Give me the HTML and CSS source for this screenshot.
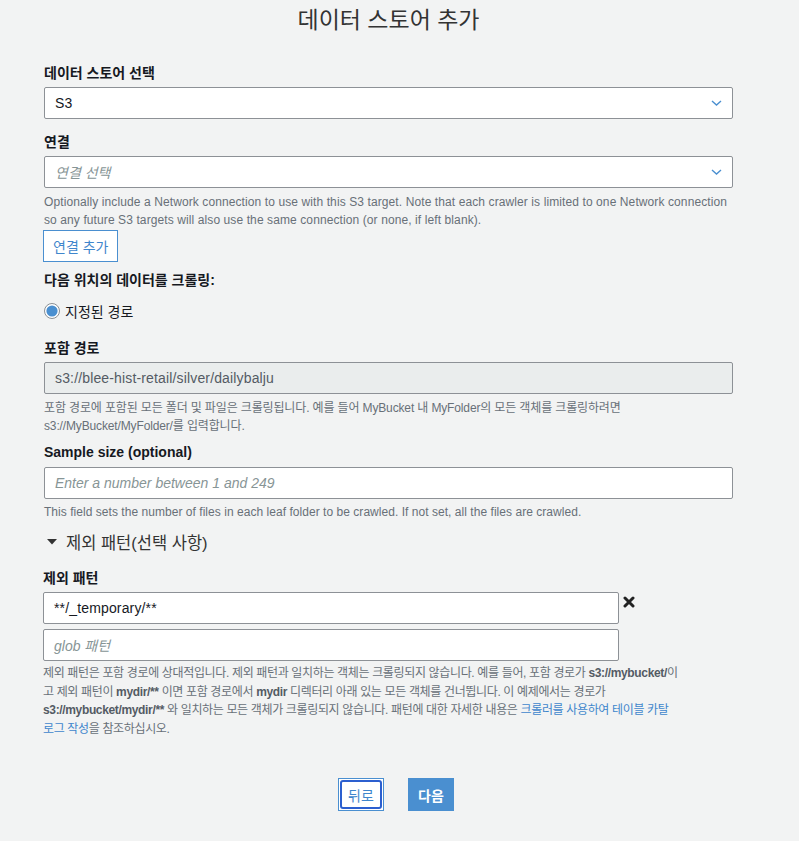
FILE: index.html
```html
<!DOCTYPE html>
<html lang="ko">
<head>
<meta charset="utf-8">
<title>데이터 스토어 추가</title>
<link rel="stylesheet" href="styles.css">
</head>
<body>
<main class="form">
  <h1 class="title">데이터 스토어 추가</h1>

  <div class="label l-store">데이터 스토어 선택</div>
  <div class="control select">
    <span class="value">S3</span>
    <svg class="chev" width="11" height="6" viewBox="0 0 11 6"><polyline points="1,1 5.5,5 10,1" fill="none" stroke="#4a8fd0" stroke-width="1.4"/></svg>
  </div>

  <div class="label l-conn">연결</div>
  <div class="control select">
    <span class="placeholder">연결 선택</span>
    <svg class="chev" width="11" height="6" viewBox="0 0 11 6"><polyline points="1,1 5.5,5 10,1" fill="none" stroke="#4a8fd0" stroke-width="1.4"/></svg>
  </div>
  <p class="help h-conn">Optionally include a Network connection to use with this S3 target. Note that each crawler is limited to one Network connection<br>so any future S3 targets will also use the same connection (or none, if left blank).</p>
  <button class="btn-outline" type="button">연결 추가</button>

  <div class="label l-crawl">다음 위치의 데이터를 크롤링:</div>
  <label class="radio-row">
    <svg width="16" height="16" viewBox="0 0 16 16"><circle cx="8" cy="8" r="7.5" fill="#fff" stroke="#8a8f94" stroke-width="1"/><circle cx="8" cy="8" r="5.6" fill="#4a8fd0"/></svg>
    <span>지정된 경로</span>
  </label>

  <div class="label l-path">포함 경로</div>
  <div class="control disabled"><span class="value">s3://blee-hist-retail/silver/dailybalju</span></div>
  <p class="help ko h-path">포함 경로에 포함된 모든 폴더 및 파일은 크롤링됩니다. 예를 들어 MyBucket 내 MyFolder의 모든 객체를 크롤링하려면<br>s3://MyBucket/MyFolder/를 입력합니다.</p>

  <div class="label l-sample">Sample size (optional)</div>
  <div class="control"><span class="placeholder">Enter a number between 1 and 249</span></div>
  <p class="help h-sample">This field sets the number of files in each leaf folder to be crawled. If not set, all the files are crawled.</p>

  <div class="toggle">
    <svg width="10" height="6" viewBox="0 0 10 6"><polygon points="0,0 10,0 5,5.5" fill="#333"/></svg>
    <span>제외 패턴(선택 사항)</span>
  </div>

  <div class="exclude">
    <div class="label l-excl">제외 패턴</div>
    <div class="excl-row">
      <div class="control short"><span class="value">**/_temporary/**</span></div>
      <svg class="remove" width="12" height="12" viewBox="0 0 12 12"><path d="M2 2 L10 10 M10 2 L2 10" stroke="#222" stroke-width="3" stroke-linecap="round"/></svg>
    </div>
    <div class="control short second"><span class="placeholder">glob 패턴</span></div>
    <p class="help ko h-excl">제외 패턴은 포함 경로에 상대적입니다. 제외 패턴과 일치하는 객체는 크롤링되지 않습니다. 예를 들어, 포함 경로가 <b>s3://mybucket/</b>이<br>고 제외 패턴이 <b>mydir/**</b> 이면 포함 경로에서 <b>mydir</b> 디렉터리 아래 있는 모든 객체를 건너뜁니다. 이 예제에서는 경로가<br><b>s3://mybucket/mydir/**</b> 와 일치하는 모든 객체가 크롤링되지 않습니다. 패턴에 대한 자세한 내용은 <a href="#">크롤러를 사용하여 테이블 카탈<br>로그 작성</a>을 참조하십시오.</p>
  </div>
</main>

<div class="actions">
  <button class="btn-back" type="button"><span>뒤로</span></button>
  <button class="btn-primary" type="button">다음</button>
</div>
</body>
</html>
```

FILE: styles.css
```css
html, body {
  margin: 0;
  padding: 0;
  background: #f2f3f3;
}
body {
  font-family: "Liberation Sans", "Noto Sans CJK KR", sans-serif;
  color: #16191f;
  width: 799px;
  min-height: 841px;
}
.form {
  margin-left: 44px;
  width: 689px;
  display: flex;
  flex-direction: column;
  align-items: flex-start;
}
.title {
  margin: 0;
  width: 100%;
  text-align: center;
  font-size: 23px;
  font-weight: normal;
  line-height: 40px;
  height: 40px;
  color: #333;
}
.label {
  font-size: 14px;
  font-weight: bold;
  line-height: 20px;
  color: #16191f;
}
.l-store { margin-top: 23px; }
.l-conn { margin-top: 13px; }
.l-crawl { margin-top: 8px; }
.l-path { margin-top: 17px; }
.l-sample { margin-top: 7px; }
.l-excl { margin-top: 15px; }

.control {
  box-sizing: border-box;
  width: 100%;
  height: 32px;
  margin-top: 4px;
  background: #fff;
  border: 1px solid #8d9196;
  border-radius: 2px;
  display: flex;
  align-items: center;
  justify-content: space-between;
  padding: 0 10px 0 10px;
  font-size: 14px;
}
.l-sample + .control { margin-top: 5px; }
.control .value { color: #16191f; letter-spacing: 0.15px; }
.control .placeholder { color: #879596; font-style: italic; }
.control.disabled { background: #eaeded; }
.control.disabled .value { color: #545b64; }
.chev { display: block; }

.help {
  margin: 0;
  font-size: 12px;
  line-height: 18px;
  color: #687078;
  white-space: nowrap;
  letter-spacing: 0.04px;
}
.help.ko { letter-spacing: -0.14px; }
.h-conn { margin-top: 5px; letter-spacing: 0.1px; }
.h-path { margin-top: 5px; }
.h-sample { margin-top: 4px; }

.btn-outline {
  margin-top: 1px;
  height: 32px;
  padding: 0 9px;
  margin-left: -1px;
  background: #fff;
  border: 1px solid #4a8fd0;
  color: #3f86cc;
  font-family: inherit;
  font-size: 14px;
  cursor: pointer;
}

.radio-row {
  margin-top: 11px;
  height: 20px;
  display: flex;
  align-items: center;
  gap: 5px;
  font-size: 14px;
  color: #16191f;
}
.radio-row svg { display: block; }

.toggle {
  margin-top: 10px;
  height: 22px;
  display: flex;
  align-items: center;
  gap: 9px;
  padding-left: 3px;
  font-size: 16.5px;
  color: #333;
}
.toggle svg { display: block; }

.exclude {
  width: 100%;
  margin-left: -1px;
  display: flex;
  flex-direction: column;
  align-items: flex-start;
}
.excl-row {
  display: flex;
  align-items: flex-start;
  gap: 4px;
  margin-top: 4px;
}
.excl-row .control { margin-top: 0; }
.excl-row .remove { display: block; margin-top: 4px; }
.control.short { width: 576px; }
.control.second { margin-top: 5px; }
.help.h-excl {
  margin-top: 3px;
  line-height: 18.5px;
  letter-spacing: -0.35px;
}
.h-excl b { font-weight: bold; color: #545b64; }
.h-excl a { color: #3f86cc; text-decoration: none; }

.actions {
  margin-top: 40px;
  display: flex;
  justify-content: center;
  gap: 24px;
  padding-right: 7px;
}
.btn-back {
  box-sizing: border-box;
  width: 46px;
  height: 33px;
  padding: 1px;
  background: #fff;
  border: 1px solid #4a8fd0;
  font-family: inherit;
  cursor: pointer;
  display: flex;
}
.btn-back span {
  flex: 1;
  display: flex;
  align-items: center;
  justify-content: center;
  border: 2px solid #2c5fcf;
  border-radius: 3px;
  color: #3f86cc;
  font-size: 14px;
}
.btn-primary {
  box-sizing: border-box;
  width: 46px;
  height: 33px;
  background: #4a8fd0;
  border: none;
  color: #fff;
  font-family: inherit;
  font-size: 14px;
  font-weight: bold;
  cursor: pointer;
}
```
